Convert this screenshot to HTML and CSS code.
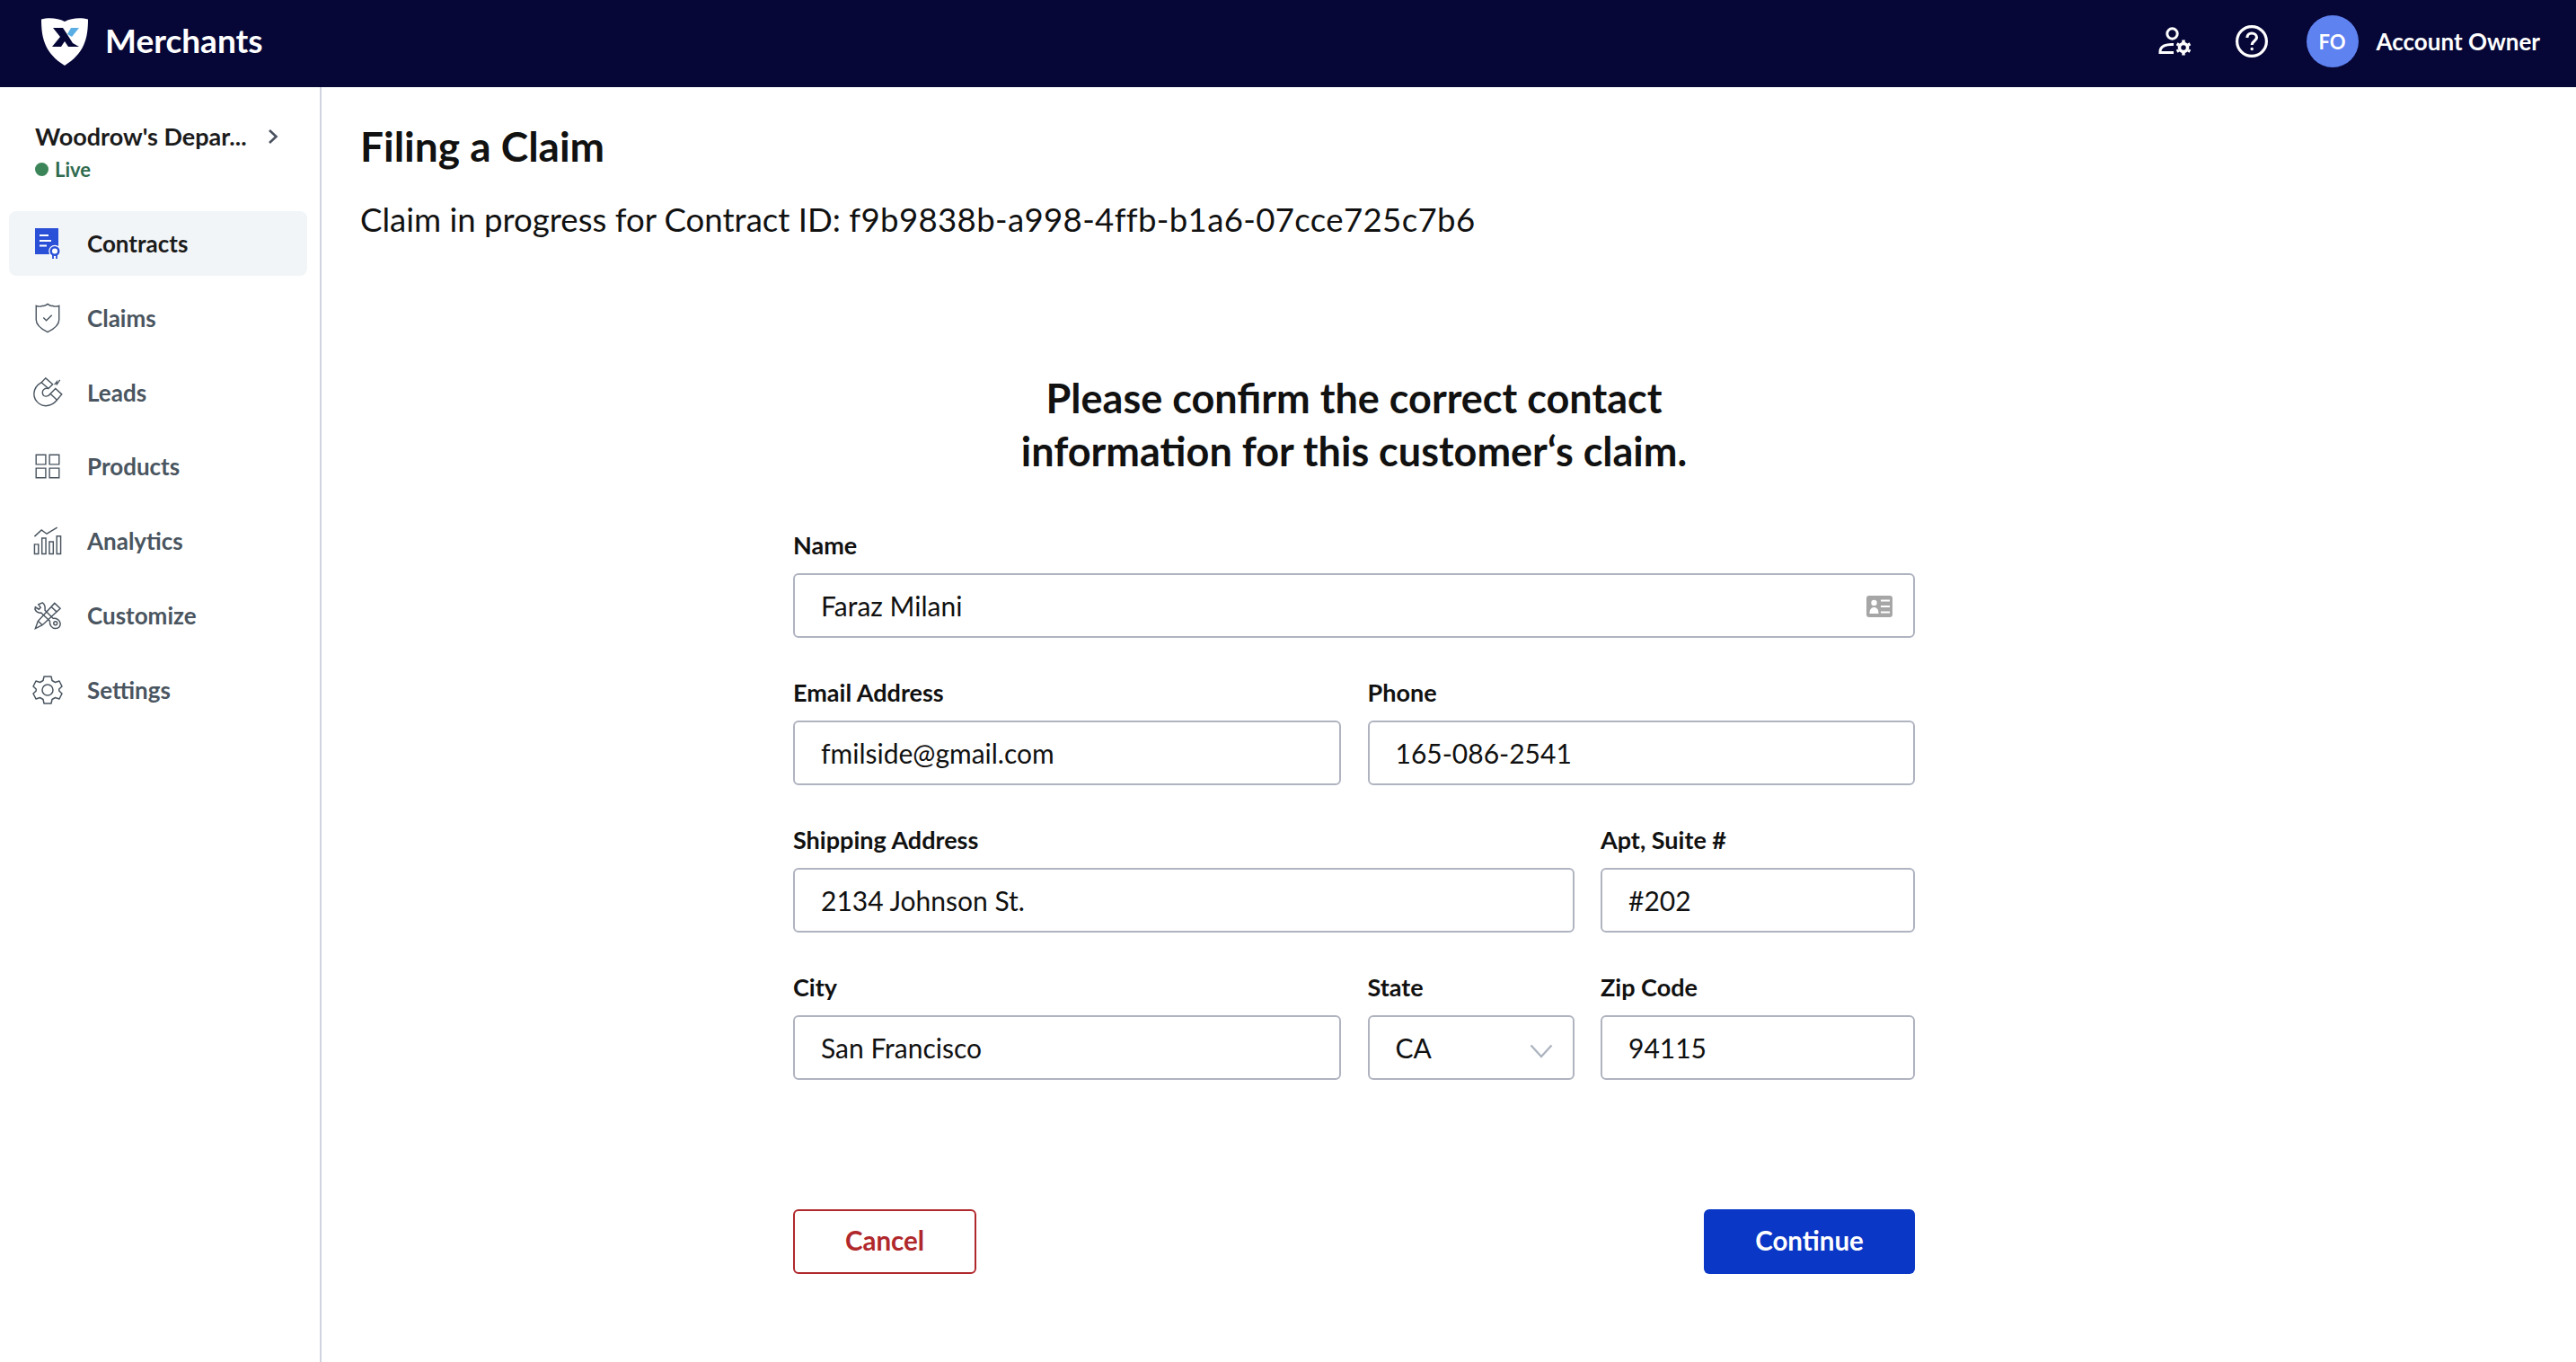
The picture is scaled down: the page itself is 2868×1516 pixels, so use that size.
FILE: index.html
```html
<!DOCTYPE html>
<html lang="en">

<head>
    <meta charset="UTF-8">
    <meta name="viewport" content="width=device-width, initial-scale=1.0">
    <title>Merchants - Filing a Claim</title>
    <link rel="stylesheet" href="styles.css">
</head>

<body>
    <header class="topbar">
        <div class="brand">
            <svg class="brand-logo" viewBox="0 0 52 54">
                <path d="M0 2.5C7 0.5 18 0.5 26 5C34 0.5 45 0.5 52 2.5C52 24 48 40 26 54C4 40 0 24 0 2.5Z" fill="#fff"/>
                <path d="M13 12H24L28 18L35 29L42 33H30L26 27L22 33H12L21 22Z" fill="#060737"/>
                <path d="M29 19L33 12H42L34 22Z" fill="#5aaee3"/>
            </svg>
            <span class="brand-name">Merchants</span>
        </div>
        <div class="topbar-right">
            <svg class="top-icon admin-icon" viewBox="0 0 38 34" fill="none" stroke="#fff" stroke-width="3">
                <circle cx="15.500" cy="8.500" r="5.700"/>
                <path d="M17 20.500C9 20 2 22 2 28.500V29.500H17"/>
                <circle cx="28" cy="24" r="4.500" stroke-width="3.500"/>
                <path d="M28 15.500V18.500M28 29.500V32.500M33.200 21L35.400 19.750M33.200 27L35.400 28.250M22.800 21L20.600 19.750M22.800 27L20.600 28.250" stroke-width="3.500"/>
            </svg>
            <svg class="top-icon help-icon" viewBox="0 0 36 36" fill="none" stroke="#fff" stroke-width="3.200">
                <circle cx="18" cy="18" r="16.400"/>
                <path d="M12.800 14C13 10.500 15.500 9 18 9C21 9 23.500 11 23.500 13.800C23.500 17.500 18.200 17.500 18.200 22"/>
                <circle cx="18.200" cy="26.500" r="1.700" fill="#fff" stroke="none"/>
            </svg>
            <span class="avatar">FO</span>
            <span class="account-name">Account Owner</span>
        </div>
    </header>

    <div class="page">
        <aside class="sidebar">
            <div class="store">
                <div class="store-row">
                    <span class="store-name">Woodrow's Depar...</span>
                    <svg class="store-chevron" viewBox="0 0 12 18" fill="none" stroke="#4a5260" stroke-width="2.600">
                        <path d="M2 2L9.500 9L2 16"/>
                    </svg>
                </div>
                <div class="store-status"><i class="live-dot"></i>Live</div>
            </div>

            <ul class="nav">
                <li class="nav-item active">
                    <svg class="nav-icon" viewBox="0 0 30 34">
                        <path d="M1 0H27V29H1Z" fill="#2a50d8"/>
                        <path d="M6 8H16M6 14H19M6 19.500H14" stroke="#fff" stroke-width="1.800" fill="none"/>
                        <circle cx="23" cy="25.500" r="6.800" fill="#fff"/>
                        <circle cx="23" cy="25.500" r="4.300" fill="none" stroke="#2a50d8" stroke-width="2.500"/>
                        <path d="M21 30V34M25 30V34" stroke="#2a50d8" stroke-width="1.800"/>
                    </svg>
                    <span>Contracts</span>
                </li>
                <li class="nav-item">
                    <svg class="nav-icon" viewBox="0 0 32 36" fill="none" stroke="#4a5560" stroke-width="1.500">
                        <path d="M2.500 3.500C5 4.500 8 4.500 10 3.500C12 4.500 14 3 16 1.500C18 3 20 4.500 22 3.500C24 4.500 27 4.500 29.500 3.500V20C29.500 27 22 31.500 16 34.500C10 31.500 2.500 27 2.500 20Z"/>
                        <path d="M11 17.500L14.500 21L21 14.500"/>
                    </svg>
                    <span>Claims</span>
                </li>
                <li class="nav-item">
                    <svg class="nav-icon" viewBox="0 0 36 36" fill="none" stroke="#4a5560" stroke-width="1.500">
                        <path d="M10.700 6L15.700 0.900L24 8.300L19 13.300C15 12 11.500 15 12 18.500C12.500 23 18 24 21.300 19.300L27.300 13.300L34.700 20L29 26.700C24 33 15 36 8 31C0 25 -1 13 10.700 6Z"/>
                        <path d="M10.700 6L19 13.300M21.300 19.300L29 26.700"/>
                        <path d="M26 8.500L29 5L28.500 9L32.500 3" stroke-width="1.300"/>
                    </svg>
                    <span>Leads</span>
                </li>
                <li class="nav-item">
                    <svg class="nav-icon" viewBox="-3.500 -3.500 36.500 36.500" fill="none" stroke="#4a5560" stroke-width="1.500">
                        <path d="M1 1H12.500V12.500H1ZM17 1H28.500V12.500H17ZM1 17H12.500V28.500H1ZM17 17H28.500V28.500H17Z"/>
                    </svg>
                    <span>Products</span>
                </li>
                <li class="nav-item">
                    <svg class="nav-icon" viewBox="-1.500 -1.500 35 35" fill="none" stroke="#4a5560" stroke-width="1.500">
                        <path d="M1 11L9 3.500L15 8L27 0.800"/>
                        <path d="M1 20H5.500V31H1ZM9.500 13H14V31H9.500ZM18 17H22.500V31H18ZM26.500 10.500H31V31H26.500Z"/>
                    </svg>
                    <span>Analytics</span>
                </li>
                <li class="nav-item">
                    <svg class="nav-icon" viewBox="-1.500 -1.500 35 35" fill="none" stroke="#4a5560" stroke-width="1.500">
                        <path d="M10 1.500L5.500 3.500L8 7L6 9L2 6.500L1.500 9C3 12 5.500 13.500 8.500 13L18.500 22.500C18 27 21 31 25 31C29 31 31 28 30.500 25C30 21.500 26.500 19 22.500 19.500L13 10C13.500 6 12.500 3 10 1.500Z"/>
                        <circle cx="25" cy="25" r="2"/>
                        <path d="M24 2L30.500 8L10 27L2 31L5 22.500Z"/>
                        <path d="M5 22.500L10 27M20 6L26.500 12"/>
                    </svg>
                    <span>Customize</span>
                </li>
                <li class="nav-item">
                    <svg class="nav-icon" viewBox="0 0 34 32" fill="none" stroke="#4a5560" stroke-width="1.500">
                        <circle cx="17" cy="16" r="6"/>
                        <path d="M13 1L21 1L22 5.500L25.500 7.500L30 6L33 12L29.800 15L29.800 17L33 20L30 26L25.500 24.500L22 26.500L21 31H13L12 26.500L8.500 24.500L4 26L1 20L4.200 17V15L1 12L4 6L8.500 7.500L12 5.500Z" stroke-linejoin="round"/>
                    </svg>
                    <span>Settings</span>
                </li>
            </ul>
        </aside>

        <main class="content">
            <h1 class="page-title">Filing a Claim</h1>
            <p class="claim-line">Claim in progress for Contract ID: <span class="claim-id">f9b9838b-a998-4ffb-b1a6-07cce725c7b6</span></p>

            <form class="claim-form">
                <h2 class="form-title">Please confirm the correct contact<br>information for this customer‘s claim.</h2>

                <div class="fields">
                    <div class="field span-3">
                        <label>Name</label>
                        <div class="control">
                            <input type="text" value="Faraz Milani">
                            <svg class="card-icon" viewBox="0 0 29 24">
                                <rect width="29" height="24" rx="3" fill="#a6a6a6"/>
                                <circle cx="8.500" cy="8" r="3.200" fill="#fff"/>
                                <path d="M3.500 20C3.500 15 5.500 13 8.500 13C11.500 13 13.500 15 13.500 20Z" fill="#fff"/>
                                <path d="M16 5.500H26M16 12H26M16 18.500H26" stroke="#fff" stroke-width="2.200"/>
                            </svg>
                        </div>
                    </div>

                    <div class="field">
                        <label>Email Address</label>
                        <input type="text" value="fmilside@gmail.com">
                    </div>
                    <div class="field span-2">
                        <label>Phone</label>
                        <input type="text" value="165-086-2541">
                    </div>

                    <div class="field span-2">
                        <label>Shipping Address</label>
                        <input type="text" value="2134 Johnson St.">
                    </div>
                    <div class="field">
                        <label>Apt, Suite #</label>
                        <input type="text" value="#202">
                    </div>

                    <div class="field">
                        <label>City</label>
                        <input type="text" value="San Francisco">
                    </div>
                    <div class="field">
                        <label>State</label>
                        <div class="control">
                            <select>
                                <option>CA</option>
                            </select>
                            <svg class="select-arrow" viewBox="0 0 26 16" fill="none" stroke="#aeb5c0" stroke-width="2.400">
                                <path d="M1.500 1.500L13 14L24.500 1.500"/>
                            </svg>
                        </div>
                    </div>
                    <div class="field">
                        <label>Zip Code</label>
                        <input type="text" value="94115">
                    </div>
                </div>

                <div class="actions">
                    <button type="button" class="btn btn-cancel">Cancel</button>
                    <button type="button" class="btn btn-primary">Continue</button>
                </div>
            </form>
        </main>
    </div>
</body>

</html>
```

FILE: styles.css
```css
* {
    box-sizing: border-box;
}

body,
ul,
h1,
h2,
p {
    margin: 0;
    padding: 0;
}

body {
    font-family: "Lato", "Noto Sans", sans-serif;
    color: #111;
    background: #fff;
}

ul {
    list-style: none;
}

.topbar {
    display: flex;
    justify-content: space-between;
    align-items: center;
    height: 97px;
    padding: 0 40px 5px 46px;
    background: #060737;
    color: #fff;
}

.brand,
.topbar-right {
    display: flex;
    align-items: center;
}

.brand-logo {
    width: 52px;
    height: 54px;
}

.brand-name {
    margin: 0 0 3px 19px;
    font-size: 37px;
    font-weight: 700;
}

.top-icon {
    display: block;
}

.admin-icon {
    width: 38px;
    height: 34px;
    margin-right: 48px;
}

.help-icon {
    width: 36px;
    height: 36px;
    margin-right: 43px;
}

.avatar {
    display: flex;
    justify-content: center;
    align-items: center;
    width: 58px;
    height: 58px;
    border-radius: 50%;
    background: #5f82f1;
    font-size: 22px;
    font-weight: 700;
}

.account-name {
    margin-left: 20px;
    font-size: 26px;
    font-weight: 700;
}

.page {
    display: flex;
    min-height: 1419px;
}

.sidebar {
    width: 358px;
    flex-shrink: 0;
    padding: 38px 14px 0 10px;
    border-right: 2px solid #d0d4e0;
}

.store {
    padding-left: 29px;
}

.store-row {
    display: flex;
    justify-content: space-between;
    align-items: center;
    padding-right: 32px;
}

.store-name {
    font-size: 27px;
    font-weight: 700;
    color: #1b1b1b;
}

.store-chevron {
    width: 12px;
    height: 18px;
}

.store-status {
    display: flex;
    align-items: center;
    margin-top: 7px;
    font-size: 22px;
    font-weight: 700;
    color: #2f6b4e;
}

.live-dot {
    width: 15px;
    height: 15px;
    margin-right: 7px;
    border-radius: 50%;
    background: #3b8558;
}

.nav {
    margin-top: 33px;
}

.nav-item {
    display: flex;
    align-items: center;
    height: 72px;
    margin-bottom: 10.800px;
    padding-left: 43px;
    border-radius: 8px;
    font-size: 26px;
    font-weight: 700;
    color: #4a5560;
    position: relative;
}

.nav-item span {
    margin-left: 44px;
}

.nav-item.active {
    background: #f2f5f8;
    color: #1b1b1b;
}

.nav-icon {
    position: absolute;
    left: 26px;
    top: 19px;
    width: 34px;
    height: 34px;
}

.content {
    flex: 1;
    padding: 38px 0 0 43px;
}

.page-title {
    font-size: 46px;
    font-weight: 700;
    line-height: 56px;
}

.claim-line {
    margin-top: 28px;
    font-size: 36.600px;
    line-height: 50px;
}

.claim-id {
    letter-spacing: 0.350px;
}

.claim-form {
    width: 1249px;
    margin: 145px 0 0 482px;
}

.form-title {
    font-size: 45px;
    font-weight: 700;
    line-height: 59px;
    text-align: center;
}

.fields {
    display: grid;
    grid-template-columns: 610px 230px 350px;
    gap: 44px 29.500px;
    margin-top: 58px;
}

.field label {
    display: block;
    height: 34px;
    margin-bottom: 14px;
    font-size: 27px;
    font-weight: 700;
    line-height: 34px;
}

.span-2 {
    grid-column: span 2;
}

.span-3 {
    grid-column: span 3;
}

.control {
    position: relative;
}

input,
select {
    display: block;
    width: 100%;
    height: 72px;
    padding: 0 29px;
    border: 2px solid #b0b4c0;
    border-radius: 6px;
    outline: none;
    background: #fff;
    font-family: inherit;
    font-size: 30px;
    color: #111;
    appearance: none;
}

.card-icon {
    position: absolute;
    right: 25px;
    top: 25px;
    width: 29px;
    height: 24px;
}

.select-arrow {
    position: absolute;
    right: 24px;
    top: 32px;
    width: 26px;
    height: 16px;
}

.actions {
    display: flex;
    justify-content: space-between;
    margin-top: 144px;
}

.btn {
    height: 72px;
    padding-bottom: 4px;
    border-radius: 6px;
    font-family: inherit;
    font-size: 29.500px;
    font-weight: 700;
}

.btn-cancel {
    width: 204px;
    border: 2px solid #b0282c;
    background: #fff;
    color: #b0282c;
}

.btn-primary {
    width: 235px;
    border: 0;
    background: #0a37c5;
    color: #fff;
}
```
